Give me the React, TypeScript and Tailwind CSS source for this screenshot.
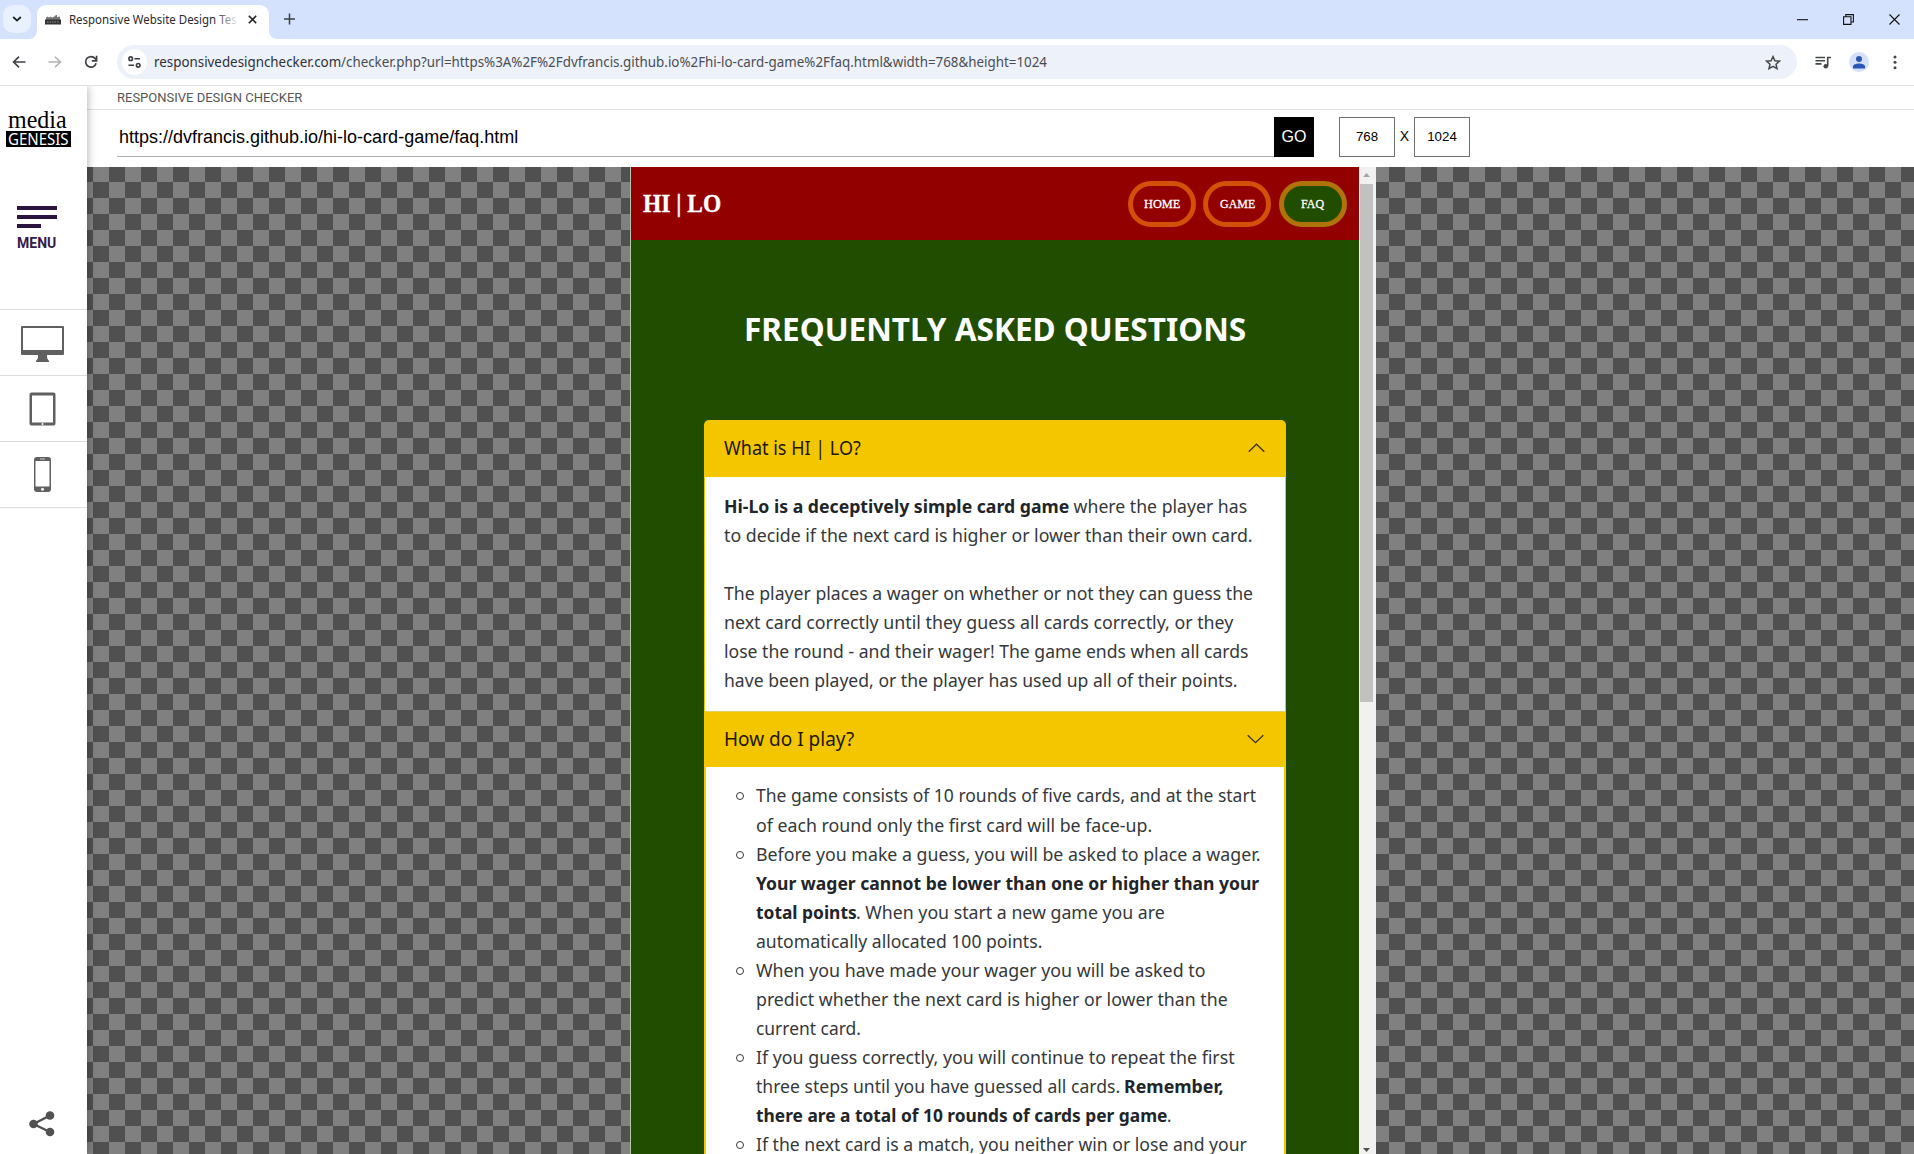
import { useLayoutEffect, useRef, useState, type ReactNode } from "react";

/** One line of text condensed or widened to a given measure. */
function Fit({ w, className = "", children }: { w: number; className?: string; children: ReactNode }) {
  const ref = useRef<HTMLSpanElement>(null);
  const [scale, setScale] = useState(1);
  useLayoutEffect(() => {
    if (ref.current) setScale(w / ref.current.offsetWidth);
  }, [w]);
  return (
    <span className={`block shrink-0 ${className}`} style={{ width: w }}>
      <span
        ref={ref}
        className="inline-block origin-left whitespace-pre align-top"
        style={{ transform: `scaleX(${scale})` }}
      >
        {children}
      </span>
    </span>
  );
}

type Segment = { t: string; w: number; b?: boolean };
type TextLine = Segment[];

const intro: TextLine[] = [
  [
    { t: "Hi-Lo is a deceptively simple card game", w: 345.5, b: true },
    { t: " where the player has", w: 178.5 },
  ],
  [{ t: "to decide if the next card is higher or lower than their own card.", w: 529 }],
  [],
  [{ t: "The player places a wager on whether or not they can guess the", w: 529.5 }],
  [{ t: "next card correctly until they guess all cards correctly, or they", w: 509 }],
  [{ t: "lose the round - and their wager! The game ends when all cards", w: 524.5 }],
  [{ t: "have been played, or the player has used up all of their points.", w: 514 }],
];

const steps: TextLine[][] = [
  [
    [{ t: "The game consists of 10 rounds of five cards, and at the start", w: 499.5 }],
    [{ t: "of each round only the first card will be face-up.", w: 396.5 }],
  ],
  [
    [{ t: "Before you make a guess, you will be asked to place a wager.", w: 504.5 }],
    [{ t: "Your wager cannot be lower than one or higher than your", w: 503, b: true }],
    [
      { t: "total points", w: 100.5, b: true },
      { t: ". When you start a new game you are", w: 308.5 },
    ],
    [{ t: "automatically allocated 100 points.", w: 286 }],
  ],
  [
    [{ t: "When you have made your wager you will be asked to", w: 449 }],
    [{ t: "predict whether the next card is higher or lower than the", w: 471.5 }],
    [{ t: "current card.", w: 104.5 }],
  ],
  [
    [{ t: "If you guess correctly, you will continue to repeat the first", w: 479 }],
    [
      { t: "three steps until you have guessed all cards. ", w: 368.5 },
      { t: "Remember,", w: 100, b: true },
    ],
    [
      { t: "there are a total of 10 rounds of cards per game", w: 411.5, b: true },
      { t: ".", w: 4.5 },
    ],
  ],
  [
    [{ t: "If the next card is a match, you neither win or lose and your", w: 491 }],
  ],
];

function Lines({ lines, looseFirst = false }: { lines: TextLine[]; looseFirst?: boolean }) {
  return (
    <>
      {lines.map((line, i) => (
        <span key={i} className={`flex ${looseFirst && i === 0 ? "h-[30px]" : "h-[29px]"}`}>
          {line.map((s) => (
            <Fit key={s.t} w={s.w} className={s.b ? "font-bold text-[#212529]" : ""}>
              {s.t}
            </Fit>
          ))}
        </span>
      ))}
    </>
  );
}

function TabStrip() {
  return (
    <div className="flex h-[39px] shrink-0 bg-[#d5e2fd] pl-[3px] pt-[5px]">
      <div className="flex h-[28px] w-[28px] items-center justify-center rounded-[10px] bg-[#e9f0fe]">
        <svg width="10" height="6" viewBox="0 0 10 6" fill="none" stroke="#202124" strokeWidth="1.8">
          <path d="M1.2 1 5 4.6 8.8 1" />
        </svg>
      </div>
      <div className="relative ml-[6px] flex h-[34px] w-[232px] items-center rounded-t-[9px] bg-white pl-[8px] pb-[5px]">
        <svg className="absolute -left-[8px] bottom-0" width="8" height="8">
          <path d="M8 0V8H0A8 8 0 0 0 8 0Z" fill="#fff" />
        </svg>
        <svg className="absolute -right-[8px] bottom-0" width="8" height="8">
          <path d="M0 0V8H8A8 8 0 0 1 0 0Z" fill="#fff" />
        </svg>
        <svg width="16" height="10" viewBox="0 0 16 10">
          <path d="M1 5V2.5l1.5-1L4 2.5 5.5 1.4 7 2.5l2-.8L11 0h1v2l3-.4V5Z" fill="#777" />
          <rect y="4.5" width="16" height="5" fill="#333" />
          <path d="M2 7h12" stroke="#999" strokeDasharray="1.5 1" />
        </svg>
        <div className="relative ml-[8px] w-[168px] overflow-hidden font-['Noto_Sans'] text-[12px] leading-[18px] text-[#2b2b2d]">
          <Fit w={168}>Responsive Website Design Tes</Fit>
          <div className="absolute right-0 top-0 h-full w-[22px] bg-linear-to-r from-white/0 to-white/90" />
        </div>
        <svg className="ml-[11px]" width="9" height="9" viewBox="0 0 9 9" stroke="#202124" strokeWidth="1.6">
          <path d="M.8.8 8.2 8.2M8.2.8.8 8.2" />
        </svg>
      </div>
      <svg className="ml-[14.5px] mt-[8px]" width="11" height="12" viewBox="0 0 11 12" stroke="#3c4043" strokeWidth="1.5">
        <path d="M5.5.5v11M0 6h11" />
      </svg>
      <div className="ml-auto mr-[14.5px] flex h-[28px] items-center gap-[35px]">
        <svg width="11" height="11" stroke="#111" strokeWidth="1.1">
          <path d="M0 5.7h11" />
        </svg>
        <svg width="11" height="11" viewBox="0 0 11 11" fill="none" stroke="#111" strokeWidth="1.1">
          <path d="M.6 2.8H8v7.6H.6ZM2.8 2.8V.6h7.6V8H8" />
        </svg>
        <svg width="11" height="11" viewBox="0 0 11 11" stroke="#111" strokeWidth="1.1">
          <path d="M.5.5 10.5 10.5M10.5.5.5 10.5" />
        </svg>
      </div>
    </div>
  );
}

function Toolbar() {
  return (
    <div className="relative z-20 flex h-[47px] shrink-0 items-center border-b border-[#dfe2e1] bg-white pl-[12px] font-['Noto_Sans']">
      <svg width="14" height="12" viewBox="0 0 14 12" fill="none" stroke="#3f4246" strokeWidth="1.7">
        <path d="M13.5 6H1.5M7 .7 1.6 6 7 11.3" />
      </svg>
      <svg className="ml-[22px]" width="14" height="12" viewBox="0 0 14 12" fill="none" stroke="#b0b2b4" strokeWidth="1.6">
        <path d="M.5 6h12M7 .7 12.4 6 7 11.3" />
      </svg>
      <svg className="ml-[22px]" width="14" height="14" viewBox="0 0 14 14" fill="none" stroke="#3f4246" strokeWidth="1.7">
        <path d="M12.1 8.2A5.3 5.3 0 1 1 11 3.4L12.6 5.2" />
        <path d="M12.6.8v5H7.8" />
      </svg>
      <div className="ml-[19px] flex h-[34px] w-[1680px] items-center rounded-full bg-[#edf1fa] pl-[5px]">
        <div className="flex h-[26px] w-[25px] items-center justify-center rounded-full bg-white">
          <svg width="13" height="12" viewBox="0 0 13 12" fill="none" stroke="#3a3d41" strokeWidth="1.6">
            <circle cx="2.7" cy="2.7" r="1.8" />
            <path d="M6.5 2.7H12M.5 9.3H6" />
            <circle cx="10.2" cy="9.3" r="1.8" />
          </svg>
        </div>
        <div className="ml-[7px] flex text-[14px] leading-[20px] text-[#4a4d52]">
          <Fit w={187} className="text-[#2e3035]">responsivedesignchecker.com</Fit>
          <Fit w={706}>/checker.php?url=https%3A%2F%2Fdvfrancis.github.io%2Fhi-lo-card-game%2Ffaq.html&amp;width=768&amp;height=1024</Fit>
        </div>
        <svg className="ml-auto mr-[16px]" width="16" height="15" viewBox="0 0 16 15" fill="none" stroke="#474747" strokeWidth="1.5">
          <path d="M8 1.6 9.9 5.7l4.5.5-3.4 3 1 4.4L8 11.3l-4 2.3 1-4.4-3.4-3 4.5-.5Z" />
        </svg>
      </div>
      <svg className="ml-[18px]" width="17" height="13" viewBox="0 0 17 13" fill="none" stroke="#44474a" strokeWidth="1.6">
        <path d="M.5 1.5H10M.5 4.7H10M.5 7.9H6.5M12.7 10V1.5H16" />
        <circle cx="10.8" cy="10.2" r="2.3" fill="#44474a" stroke="none" />
      </svg>
      <div className="ml-[17px] flex h-[20px] w-[20px] items-center justify-center rounded-full bg-[#d3e1fb]">
        <svg width="12" height="13" viewBox="0 0 12 13" fill="#2b56b8">
          <circle cx="6" cy="3" r="3" />
          <path d="M0 12.5V10.4C0 8.5 3 7.5 6 7.5s6 1 6 2.9v2.1Z" />
        </svg>
      </div>
      <svg className="ml-[24px]" width="4" height="15" fill="#44474a">
        <circle cx="2" cy="2" r="1.5" />
        <circle cx="2" cy="7.3" r="1.5" />
        <circle cx="2" cy="12.7" r="1.5" />
      </svg>
    </div>
  );
}

function Sidebar() {
  return (
    <aside className="relative z-10 flex w-[87px] shrink-0 flex-col bg-white shadow-[0_0_9px_rgba(0,0,0,0.35)]">
      <div className="flex h-[120px] flex-col pl-[6px] pt-[23px]">
        <Fit w={59} className="ml-[2px] h-[22px] font-['Liberation_Serif'] text-[26px] leading-[21px] text-black">media</Fit>
        <div className="h-[16px] w-[65px] bg-black pl-[2px]">
          <Fit w={61} className="font-['Noto_Sans'] text-[15.5px] leading-[16px] text-white">GENESIS</Fit>
        </div>
      </div>
      <div className="flex h-[103px] flex-col pl-[17px]">
        <div className="flex flex-col gap-[5px]">
          <div className="h-[4px] w-[40px] bg-[#2d1440]" />
          <div className="h-[4px] w-[40px] bg-[#2d1440]" />
          <div className="h-[4px] w-[24px] bg-[#2d1440]" />
        </div>
        <Fit w={39} className="mt-[6px] font-['Roboto'] text-[14px] font-bold leading-[18px] text-[#351b4b]">MENU</Fit>
      </div>
      <div className="flex h-[66px] items-center border-t border-[#dcdcdc] pl-[21px]">
        <svg className="mt-[2px]" width="43" height="36" viewBox="0 0 43 36" fill="#606060">
          <path fillRule="evenodd" d="M1 0H42a1 1 0 0 1 1 1V28a1 1 0 0 1-1 1H26v3l2 3v1H15V35l2-3V29H1a1 1 0 0 1-1-1V1A1 1 0 0 1 1 0ZM2 2V24H41V2Z" />
        </svg>
      </div>
      <div className="flex h-[66px] items-center border-t border-[#dcdcdc] pl-[29px]">
        <svg width="27" height="34" viewBox="0 0 27 34" fill="#606060">
          <path fillRule="evenodd" d="M2.5.5h22a2 2 0 0 1 2 2v29a2 2 0 0 1-2 2h-22a2 2 0 0 1-2-2v-29a2 2 0 0 1 2-2ZM3 3.5V30.5H24V3.5Z" />
          <circle cx="13.5" cy="32" r="1" fill="#fff" />
        </svg>
      </div>
      <div className="flex h-[67px] items-center border-y border-[#dcdcdc] pl-[34px]">
        <svg width="17" height="35" viewBox="0 0 17 35" fill="#606060">
          <path fillRule="evenodd" d="M3 0H14a3 3 0 0 1 3 3V32a3 3 0 0 1-3 3H3a3 3 0 0 1-3-3V3A3 3 0 0 1 3 0ZM1.5 4V29.5h14V4Z" />
          <path d="M6 2h5" stroke="#ccc" />
          <circle cx="8.5" cy="32.2" r="1.5" fill="#fff" />
        </svg>
      </div>
      <svg className="mb-[17px] ml-[29px] mt-auto" width="26" height="27" viewBox="0 0 26 27" fill="#515151">
        <path d="M21 5.5 4.5 14 21 22" fill="none" stroke="#515151" strokeWidth="2.4" />
        <circle cx="21" cy="5.5" r="4.3" />
        <circle cx="4.5" cy="14" r="4.3" />
        <circle cx="21" cy="22" r="4.3" />
      </svg>
    </aside>
  );
}

function NavPill({ label, w, active = false }: { label: string; w: number; active?: boolean }) {
  return (
    <div
      className={`flex h-[46px] w-[68px] items-center justify-center rounded-full border-[5px] ${
        active ? "border-[#b0720a] bg-[#214d00]" : "border-[#d25008]"
      }`}
    >
      <Fit w={w} className="font-['Liberation_Serif'] text-[13px] leading-[16px] text-white [-webkit-text-stroke:0.3px_white]">
        {label}
      </Fit>
    </div>
  );
}

function Chevron({ up = false }: { up?: boolean }) {
  return (
    <svg className="mb-px" width="17" height="10" viewBox="0 0 17 10" fill="none" stroke="#3d3411" strokeWidth="1.3">
      <path d={up ? "M.7 8.7 8.5 1.2 16.3 8.7" : "M.7 1.2 8.5 8.7 16.3 1.2"} />
    </svg>
  );
}

function FaqPage() {
  return (
    <div className="flex w-[729px] shrink-0 flex-col overflow-hidden border-l border-[#b9c4ae] bg-[#214d00]">
      <header className="flex h-[73px] shrink-0 items-center bg-[#920000] pl-[12px] pr-[12.5px]">
        <Fit w={78} className="font-['Liberation_Serif'] text-[25px] font-bold leading-[32px] text-white [-webkit-text-stroke:0.3px_white]">
          HI | LO
        </Fit>
        <nav className="ml-auto flex gap-[7.5px]">
          <NavPill label="HOME" w={36} />
          <NavPill label="GAME" w={35} />
          <NavPill label="FAQ" w={23} active />
        </nav>
      </header>
      <h1 className="flex h-[180px] shrink-0 items-center justify-center pb-[2px] font-['Noto_Sans'] text-[32.5px] font-bold leading-[44px] text-white">
        <Fit w={502}>FREQUENTLY ASKED QUESTIONS</Fit>
      </h1>
      <section className="ml-[72.5px] w-[582px] rounded-t-[5px] bg-[#f4c600] px-px font-['Noto_Sans'] text-[18.5px] leading-[29px] text-[#35383b]">
        <div className="flex h-[57px] items-center justify-between pl-[19px] pr-[20px] text-[19px] text-[#1d1703]">
          <Fit w={136.5}>What is HI | LO?</Fit>
          <Chevron up />
        </div>
        <div className="h-[234px] bg-white pl-[19px] pt-[14px]">
          <Lines lines={intro} />
        </div>
        <div className="flex h-[56px] items-center justify-between border-t border-[#e3cf63] pl-[19.5px] pr-[21px] text-[19px] text-[#1d1703]">
          <Fit w={130}>How do I play?</Fit>
          <Chevron />
        </div>
        <ul className="mx-px bg-white pl-[50px] pt-[13px]">
          {steps.map((lines, i) => (
            <li key={i} className="relative">
              <span className="absolute -left-[19.5px] top-[12px] h-[8px] w-[8px] rounded-full border-[1.3px] border-[#35383b]" />
              <Lines lines={lines} looseFirst={i === 0} />
            </li>
          ))}
        </ul>
      </section>
    </div>
  );
}

function Scrollbar() {
  return (
    <div className="flex w-[17px] shrink-0 flex-col items-center bg-[#f1f1f1] pr-[2px]">
      <svg className="mt-[6px]" width="7" height="4" fill="#a3a3a3">
        <path d="M0 4 3.5 0 7 4Z" />
      </svg>
      <div className="mt-[7px] h-[518px] w-[13px] bg-[#c1c1c1]" />
      <svg className="mb-[2px] mt-auto" width="7" height="4" fill="#505050">
        <path d="M0 0 3.5 4 7 0Z" />
      </svg>
    </div>
  );
}

export default function App() {
  return (
    <div className="flex h-[1154px] w-[1914px] flex-col overflow-hidden bg-white">
      <TabStrip />
      <Toolbar />
      <div className="flex min-h-0 flex-1">
        <Sidebar />
        <main className="flex min-w-0 flex-1 flex-col">
          <div className="flex h-[24px] shrink-0 items-center border-b border-[#e0e3e2] pl-[30px] font-['Roboto'] text-[13px] text-[#565656]">
            <Fit w={185}>RESPONSIVE DESIGN CHECKER</Fit>
          </div>
          <div className="flex h-[57px] shrink-0 pl-[30px] pt-[7px] font-['Liberation_Sans'] text-black">
            <div className="flex h-[40px] w-[1157px] items-center border-b border-[#b1b1b1] pl-[2px] pt-px text-[18px]">
              <Fit w={399}>https://dvfrancis.github.io/hi-lo-card-game/faq.html</Fit>
            </div>
            <div className="flex h-[40px] w-[40px] items-center justify-center bg-black pb-px text-[16px] text-white">GO</div>
            <div className="ml-[25px] flex h-[40px] w-[56px] items-center justify-center border border-[#707070] text-[13.3px]">768</div>
            <div className="flex w-[19px] items-center justify-center pb-[12px] text-[14px]">X</div>
            <div className="flex h-[40px] w-[56px] items-center justify-center border border-[#707070] text-[13.3px]">1024</div>
          </div>
          <div className="flex min-h-0 flex-1 bg-[conic-gradient(#808080_25%,#505050_0_50%,#808080_0_75%,#505050_0)] bg-[length:32px_32px] bg-[position:6px_15px] pl-[543px]">
            <FaqPage />
            <Scrollbar />
          </div>
        </main>
      </div>
    </div>
  );
}
